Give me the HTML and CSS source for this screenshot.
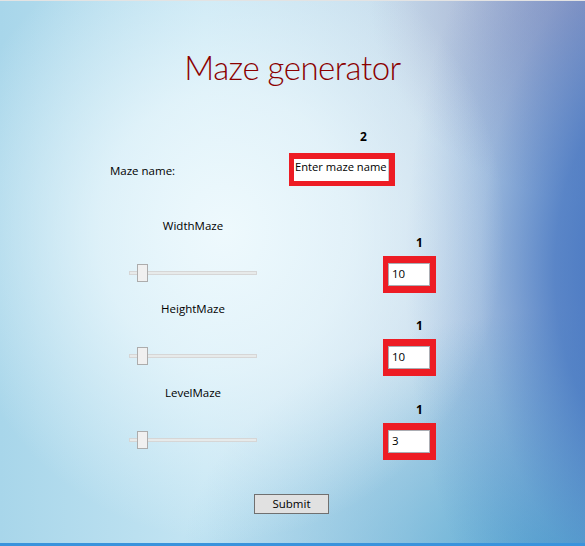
FILE: index.html
```html
<!DOCTYPE html>
<html lang="en">
<head>
<meta charset="utf-8">
<title>Maze generator</title>
<link rel="stylesheet" href="styles.css">
</head>
<body>
<div class="window">
  <h1 class="title">Maze generator</h1>

  <div class="name-row">
    <div class="name-label">Maze name:</div>
    <div class="field">
      <div class="count count-name">2</div>
      <div class="redbox redbox-name"><div class="textbox textbox-name">Enter maze name</div></div>
    </div>
  </div>

  <div class="slider-row">
    <div class="slider-col">
      <div class="slider-label">WidthMaze</div>
      <div class="slider"><div class="track"></div><div class="thumb"></div></div>
    </div>
    <div class="field field-num">
      <div class="count">1</div>
      <div class="redbox"><div class="textbox">10</div></div>
    </div>
  </div>

  <div class="slider-row slider-row-mid">
    <div class="slider-col">
      <div class="slider-label">HeightMaze</div>
      <div class="slider"><div class="track"></div><div class="thumb"></div></div>
    </div>
    <div class="field field-num">
      <div class="count">1</div>
      <div class="redbox"><div class="textbox">10</div></div>
    </div>
  </div>

  <div class="slider-row slider-row-last">
    <div class="slider-col">
      <div class="slider-label">LevelMaze</div>
      <div class="slider"><div class="track"></div><div class="thumb"></div></div>
    </div>
    <div class="field field-num">
      <div class="count">1</div>
      <div class="redbox"><div class="textbox">3</div></div>
    </div>
  </div>

  <div class="actions"><button class="submit" type="button">Submit</button></div>
</div>
</body>
</html>
```
FILE: styles.css
```css
* { box-sizing: border-box; }
html, body { margin: 0; padding: 0; }
body {
  font-family: "Open Sans", "Noto Sans", sans-serif;
  font-size: 11.5px;
  color: #000;
}
.window {
  width: 585px;
  height: 546px;
  overflow: hidden;
  border-top: 1px solid #e3e3e3;
  border-bottom: 3px solid #3a93dc;
  display: flex;
  flex-direction: column;
  background:
    radial-gradient(ellipse 280px 310px at 225px 230px, rgba(238,249,253,1) 0%, rgba(238,249,253,0.7) 45%, rgba(238,249,253,0) 100%),
    radial-gradient(ellipse 250px 460px at 655px 270px, rgba(60,110,190,1) 0%, rgba(60,110,190,0.75) 40%, rgba(60,110,190,0.25) 70%, rgba(60,110,190,0) 100%),
    radial-gradient(ellipse 230px 200px at 600px 0px, rgba(150,152,192,0.85) 0%, rgba(150,152,192,0) 100%),
    radial-gradient(ellipse 380px 260px at 560px 570px, rgba(72,165,208,0.85) 0%, rgba(72,165,208,0) 100%),
    linear-gradient(to right, #a8d6ea 0%, #c4e5f3 35%, #c7dcec 70%, #b0c8e2 100%);
}
.title {
  margin: 45px 0 0;
  text-align: center;
  font-family: "Lato", "Open Sans", sans-serif;
  font-weight: 300;
  font-size: 33px;
  letter-spacing: -0.5px;
  line-height: 42px;
  color: #8b0000;
}
.name-row {
  display: flex;
  margin-top: 41px;
  padding-left: 110px;
}
.name-label {
  width: 179px;
  padding-top: 34px;
  line-height: 16px;
}
.field { display: flex; flex-direction: column; }
.count {
  font-size: 12px;
  font-weight: 700;
  line-height: 16px;
  padding-left: 33px;
}
.count-name { padding-left: 71px; }
.redbox {
  border-style: solid;
  border-color: #ed1c24;
  border-width: 7px 6px 7px 5px;
  margin-top: 5px;
  width: 53px;
  height: 37px;
}
.redbox-name {
  border-width: 6px 6px 5px 5px;
  margin-top: 8px;
  width: 106px;
  height: 33px;
}
.textbox {
  width: 100%;
  height: 100%;
  background: #fff;
  border: 1px solid #abadb3;
  padding-left: 3px;
  line-height: 19px;
  white-space: nowrap;
  overflow: hidden;
}
.textbox-name {
  border: none;
  border-right: 1px solid #c9c9c9;
  padding-left: 1px;
  font-size: 11.2px;
  line-height: 16px;
}
.slider-row {
  display: flex;
  height: 83px;
  flex-shrink: 0;
}
.name-row + .slider-row { margin-top: 32px; }
.slider-row-mid { height: 84px; }
.slider-row-last { height: 109px; }
.slider-col {
  margin-left: 129px;
  width: 128px;
}
.slider-label {
  text-align: center;
  line-height: 16px;
}
.slider {
  position: relative;
  height: 18px;
  margin-top: 30px;
  display: flex;
  align-items: center;
}
.track {
  width: 100%;
  height: 4px;
  background: #e7eaea;
  border: 1px solid #d6d6d6;
}
.thumb {
  position: absolute;
  left: 8px;
  top: 0;
  width: 11px;
  height: 18px;
  background: #f0f0f0;
  border: 1px solid #acacac;
}
.field-num {
  margin-left: 126px;
  padding-top: 17px;
}
.actions {
  padding-left: 254px;
}
.submit {
  width: 75px;
  height: 20px;
  padding: 0;
  margin: 0;
  border: 1px solid #707070;
  border-radius: 0;
  background: #e1e1e1;
  font-family: inherit;
  font-size: 11.5px;
  line-height: 18px;
  color: #000;
}
```
